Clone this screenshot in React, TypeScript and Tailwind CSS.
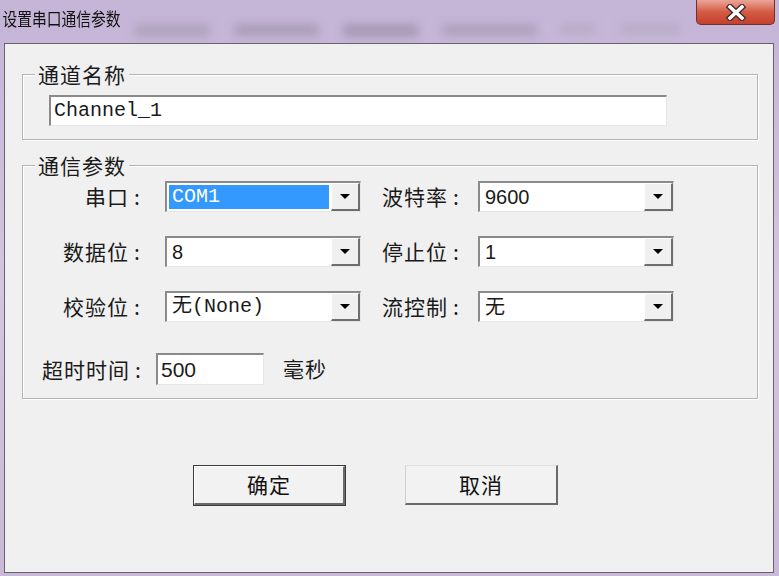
import React from "react";

const CJK = "font-['Noto_Sans_CJK_SC','Noto_Sans',sans-serif]";
const MONO = "font-['Liberation_Mono','Noto_Sans_CJK_SC',monospace]";
const SANS = "font-['Liberation_Sans','Noto_Sans_CJK_SC',sans-serif]";

function Arrow() {
  return <div className="w-0 h-0 border-l-[5px] border-r-[5px] border-t-[5px] border-l-transparent border-r-transparent border-t-black" />;
}

function Combo({ value, font, selected }: { value: string; font: string; selected?: boolean }) {
  return (
    <div className="w-[196px] h-[31px] flex border-t-2 border-l-2 border-t-[#8a8a8a] border-l-[#8a8a8a] border-b border-r border-b-[#e6e6e6] border-r-[#e6e6e6]">
      <div className="flex-1 bg-white flex items-stretch">
        {selected ? (
          <div className={`flex-1 m-[2px] bg-[#3399ff] text-white flex items-center pl-[3px] text-[20px] ${font}`}>{value}</div>
        ) : (
          <div className={`flex-1 flex items-center pl-[5px] text-[20px] text-[#1a1a1a] ${font}`}>{value}</div>
        )}
      </div>
      <div className="w-[29px] bg-[#f0f0f0] flex items-center justify-center border-t border-l border-t-white border-l-white border-r-2 border-b-2 border-r-[#6e6e6e] border-b-[#6e6e6e]">
        <Arrow />
      </div>
    </div>
  );
}

function Label({ text, w }: { text: string; w: string }) {
  return (
    <div className={`${w} flex justify-end text-[21px] leading-[31px] text-[#1a1a1a] ${CJK}`}>
      <span className="tracking-[1px]">{text}</span>
      <span className="inline-block w-[16px] text-center">:</span>
    </div>
  );
}

export default function App() {
  return (
    <div className="w-[779px] h-[576px] bg-gradient-to-b from-[#c4b4d6] via-[#d2c6e0] to-[#c8bad8] flex flex-col overflow-hidden">
      {/* title bar */}
      <div className="relative h-[43px] flex items-start">
        <div className="absolute left-[135px] top-[24px] flex gap-[24px] blur-[5px] opacity-70">
          <div className="w-[75px] h-[13px] bg-[#a69cb4]" />
          <div className="w-[85px] h-[12px] bg-[#9d93ab]" />
          <div className="w-[75px] h-[13px] bg-[#988ea6]" />
          <div className="w-[95px] h-[12px] bg-[#a39ab1]" />
          <div className="w-[35px] h-[10px] bg-[#b1a8c0]" />
          <div className="w-[60px] h-[10px] bg-[#b1a8c0]" />
        </div>
        <div className={`relative pl-[3px] pt-[5px] text-[18px] leading-[26px] text-[#111] origin-left scale-x-[0.82] whitespace-nowrap ${CJK}`}>设置串口通信参数</div>
        <div className="relative ml-auto mr-[4px] w-[79px] h-[25px] rounded-b-[5px] border border-t-0 border-[#6e3030] bg-gradient-to-b from-[#e9a596] via-[#d45a44] to-[#c4402c] flex items-center justify-center">
          <svg width="22" height="17" viewBox="0 0 22 17">
            <path d="M5 3 L17 14 M17 3 L5 14" stroke="#3a2a2a" strokeWidth="6" strokeLinecap="square" />
            <path d="M5 3 L17 14 M17 3 L5 14" stroke="#ffffff" strokeWidth="3.5" strokeLinecap="square" />
          </svg>
        </div>
      </div>

      {/* client area */}
      <div className="ml-[4px] w-[770px] h-[530px] border border-[#68626e] bg-[#f0f0f0] flex flex-col">
        {/* group 1 */}
        <div className="relative ml-[17px] mt-[30px] w-[736px] h-[66px] border border-[#b4b4b4] shadow-[inset_1px_1px_0_#ffffff,1px_1px_0_#ffffff]">
          <span className={`absolute left-[12px] -top-[13px] px-[3px] bg-[#f0f0f0] text-[21px] leading-[24px] tracking-[1px] text-[#1a1a1a] ${CJK}`}>通道名称</span>
          <div className="pl-[26px] pt-[20px]">
            <div className="w-[618px] h-[31px] bg-white border-t-2 border-l-2 border-t-[#8a8a8a] border-l-[#8a8a8a] border-b border-r border-b-[#e6e6e6] border-r-[#e6e6e6] flex items-center pl-[3px]">
              <span className={`text-[20px] text-[#1a1a1a] ${MONO}`}>Channel_1</span>
            </div>
          </div>
        </div>

        {/* group 2 */}
        <div className="relative ml-[17px] mt-[25px] w-[736px] h-[234px] border border-[#b4b4b4] shadow-[inset_1px_1px_0_#ffffff,1px_1px_0_#ffffff]">
          <span className={`absolute left-[12px] -top-[13px] px-[3px] bg-[#f0f0f0] text-[21px] leading-[24px] tracking-[1px] text-[#1a1a1a] ${CJK}`}>通信参数</span>
          <div className="pt-[15px] flex flex-col gap-[24px]">
            <div className="flex items-center">
              <Label text="串口" w="w-[122px]" />
              <div className="ml-[20px]"><Combo value="COM1" font={MONO} selected /></div>
              <Label text="波特率" w="w-[103px]" />
              <div className="ml-[14px]"><Combo value="9600" font={SANS} /></div>
            </div>
            <div className="flex items-center">
              <Label text="数据位" w="w-[122px]" />
              <div className="ml-[20px]"><Combo value="8" font={SANS} /></div>
              <Label text="停止位" w="w-[103px]" />
              <div className="ml-[14px]"><Combo value="1" font={SANS} /></div>
            </div>
            <div className="flex items-center">
              <Label text="校验位" w="w-[122px]" />
              <div className="ml-[20px]"><Combo value="无(None)" font={MONO} /></div>
              <Label text="流控制" w="w-[103px]" />
              <div className="ml-[14px]"><Combo value="无" font={SANS} /></div>
            </div>
          </div>
          <div className="mt-[31px] flex items-center">
            <Label text="超时时间" w="w-[123px]" />
            <div className="ml-[10px] w-[108px] h-[32px] bg-white border-t-2 border-l-2 border-t-[#8a8a8a] border-l-[#8a8a8a] border-b border-r border-b-[#e6e6e6] border-r-[#e6e6e6] flex items-center pl-[3px]">
              <span className={`text-[21px] text-[#1a1a1a] ${SANS}`}>500</span>
            </div>
            <span className={`ml-[19px] text-[21px] tracking-[1px] text-[#1a1a1a] ${CJK}`}>毫秒</span>
          </div>
        </div>

        {/* buttons */}
        <div className="mt-[66px] pl-[188px] flex gap-[59px]">
          <div className="w-[153px] h-[41px] border border-[#3c3c3c] flex">
            <div className={`flex-1 bg-[#f2f2f2] border-t border-l border-t-white border-l-white border-r-2 border-b-2 border-r-[#6a6a6a] border-b-[#6a6a6a] flex items-center justify-center text-[21px] tracking-[1px] text-[#111] ${CJK}`}>确定</div>
          </div>
          <div className={`w-[153px] h-[40px] bg-[#f2f2f2] border-t border-l border-t-[#e0e0e0] border-l-[#d0d0d0] border-r-2 border-b-2 border-r-[#6a6a6a] border-b-[#6a6a6a] flex items-center justify-center text-[21px] tracking-[1px] text-[#111] ${CJK}`}>取消</div>
        </div>
      </div>
    </div>
  );
}
